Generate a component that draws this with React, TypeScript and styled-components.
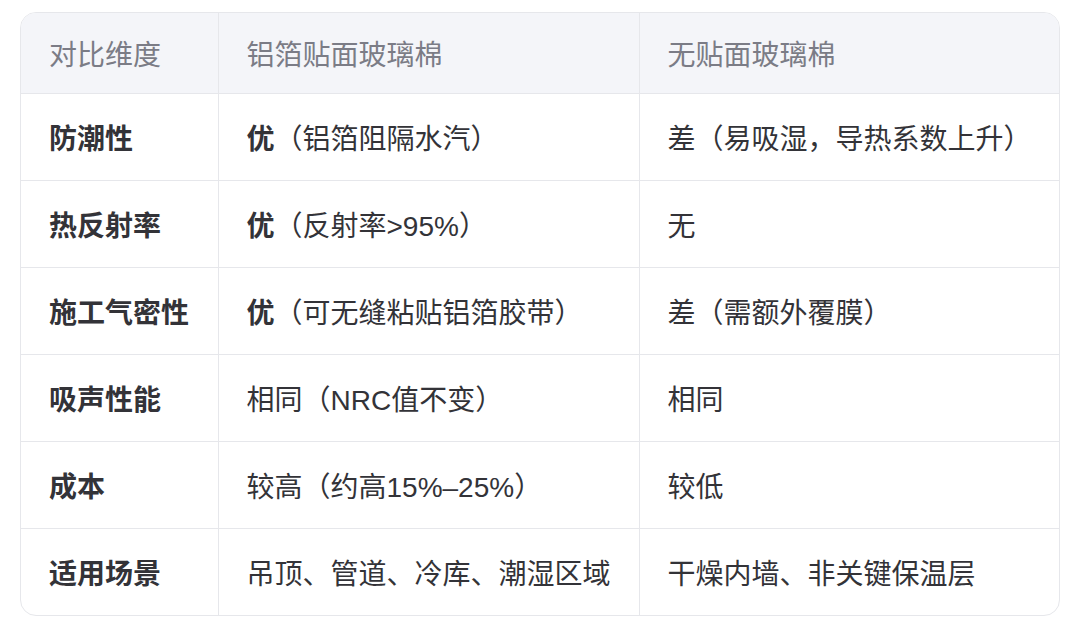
import React from "react";
import styled, { createGlobalStyle } from "styled-components";

const GlobalStyle = createGlobalStyle`
  body {
    margin: 0;
    background: #ffffff;
    font-family: "Liberation Sans", "Noto Sans CJK SC", sans-serif;
  }
`;

const Page = styled.div`
  padding: 12px 14px 18px 20px;
`;

const Wrap = styled.div`
  border: 1px solid #e6e7eb;
  border-radius: 16px;
  overflow: hidden;
  width: 1038px;
`;

const Table = styled.table`
  width: 100%;
  border-collapse: collapse;
  table-layout: fixed;
  font-size: 28px;
`;

const HeadCell = styled.th`
  background: #f4f5f9;
  color: #7b7c86;
  font-weight: 400;
  text-align: left;
  height: 80px;
  padding: 0 0 0 28px;
  border-bottom: 1px solid #e6e7eb;
  border-left: 1px solid #e6e7eb;
  &:first-child {
    border-left: none;
  }
`;

const Cell = styled.td<{ $label?: boolean }>`
  color: #333338;
  font-weight: ${(p) => (p.$label ? 700 : 400)};
  height: 86px;
  padding: 0 0 0 28px;
  border-top: 1px solid #e6e7eb;
  border-left: 1px solid #e6e7eb;
  white-space: nowrap;
  &:first-child {
    border-left: none;
  }
`;

const Row = styled.tr`
  &:first-child td {
    border-top: none;
  }
`;

const Strong = styled.strong`
  font-weight: 700;
`;

type RowData = { label: string; a: React.ReactNode; b: React.ReactNode };

const rows: RowData[] = [
  { label: "防潮性", a: <><Strong>优</Strong>（铝箔阻隔水汽）</>, b: "差（易吸湿，导热系数上升）" },
  { label: "热反射率", a: <><Strong>优</Strong>（反射率&gt;95%）</>, b: "无" },
  { label: "施工气密性", a: <><Strong>优</Strong>（可无缝粘贴铝箔胶带）</>, b: "差（需额外覆膜）" },
  { label: "吸声性能", a: "相同（NRC值不变）", b: "相同" },
  { label: "成本", a: "较高（约高15%–25%）", b: "较低" },
  { label: "适用场景", a: "吊顶、管道、冷库、潮湿区域", b: "干燥内墙、非关键保温层" },
];

export default function App() {
  return (
    <Page>
      <GlobalStyle />
      <Wrap>
        <Table>
          <colgroup>
            <col style={{ width: 197 }} />
            <col style={{ width: 421 }} />
            <col />
          </colgroup>
          <thead>
            <tr>
              <HeadCell>对比维度</HeadCell>
              <HeadCell>铝箔贴面玻璃棉</HeadCell>
              <HeadCell>无贴面玻璃棉</HeadCell>
            </tr>
          </thead>
          <tbody>
            {rows.map((r) => (
              <Row key={r.label}>
                <Cell $label>{r.label}</Cell>
                <Cell>{r.a}</Cell>
                <Cell>{r.b}</Cell>
              </Row>
            ))}
          </tbody>
        </Table>
      </Wrap>
    </Page>
  );
}
